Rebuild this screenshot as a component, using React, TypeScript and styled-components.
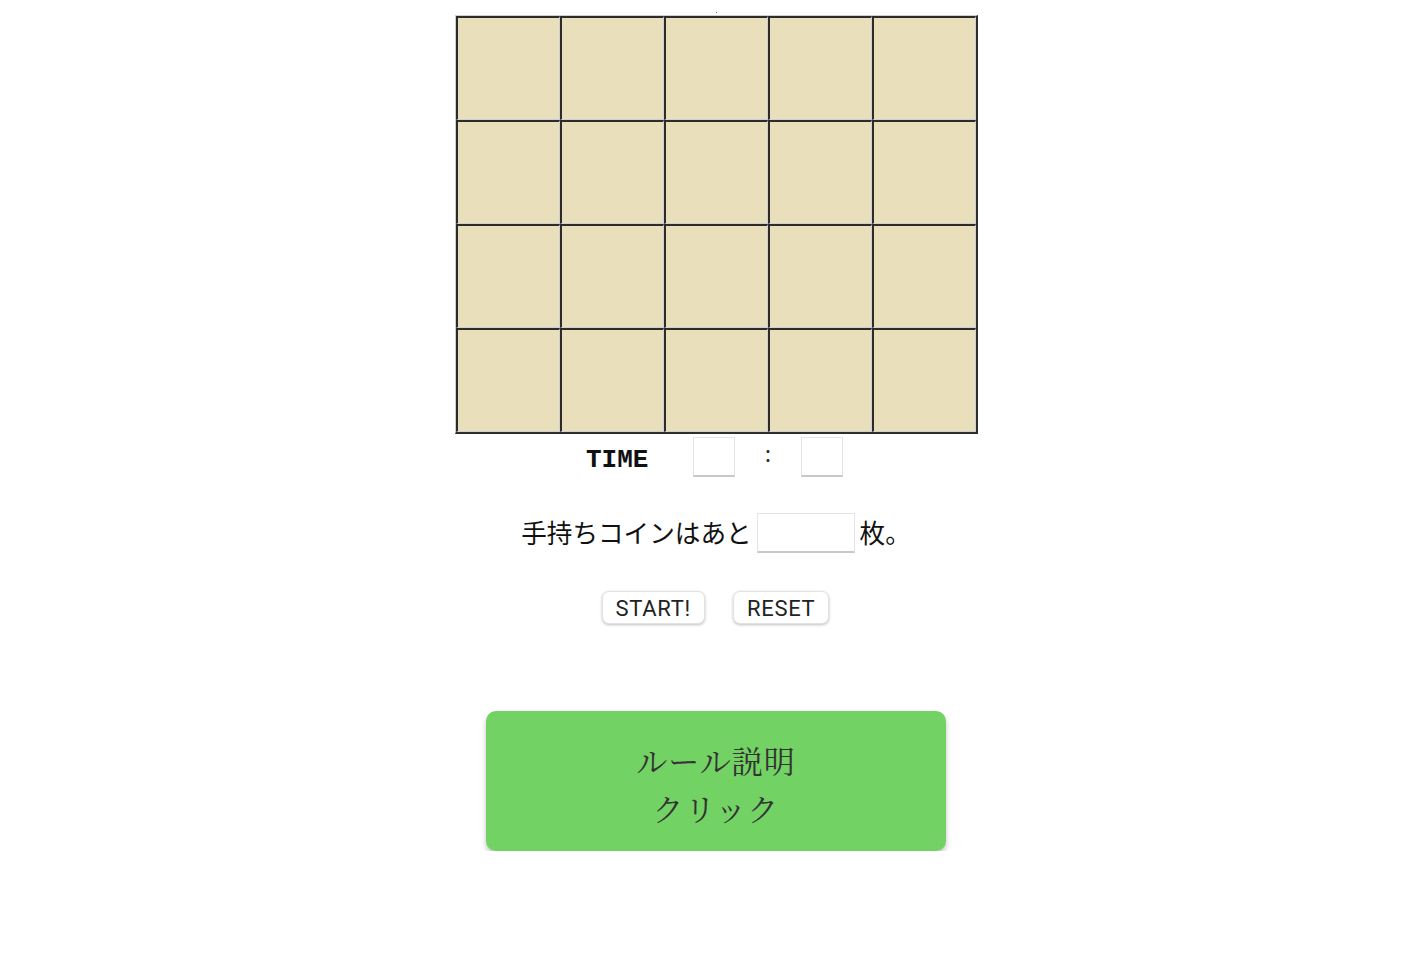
import React from "react";
import styled, { createGlobalStyle } from "styled-components";

const Global = createGlobalStyle`
  html, body { margin: 0; padding: 0; background: #fff; }
  body { font-family: "Noto Sans CJK JP", "Noto Sans", sans-serif; }
`;

const Page = styled.div`
  padding-left: 8px;
  display: flex;
  flex-direction: column;
  align-items: center;
`;

const Dot = styled.div`
  width: 1px;
  height: 1px;
  margin-top: 12px;
  margin-bottom: 2px;
  background: #d81bd0;
`;

const Board = styled.table`
  border-collapse: separate;
  border-spacing: 0;
  border-style: solid;
  border-width: 1px 2px 2px 1px;
  border-color: #cfcfcf #2e2e2e #2e2e2e #cfcfcf;
`;

const Cell = styled.td`
  width: 101px;
  height: 101px;
  padding: 0;
  background: #e9dfbb;
  border-style: solid;
  border-width: 2px 1px 1px 2px;
  border-color: #2b2b2b #cfcfcf #cfcfcf #2b2b2b;
`;

const TimeRow = styled.div`
  display: flex;
  align-items: center;
  height: 40px;
  margin-top: 3px;
  margin-left: -3px;
`;

const TimeLabel = styled.span`
  font-family: "Liberation Mono", "Courier New", monospace;
  font-weight: bold;
  font-size: 26px;
  color: #111;
  margin-top: 6px;
  width: 107px;
`;

const Colon = styled.span`
  font-family: "Noto Sans", sans-serif;
  font-size: 22px;
  color: #222;
  width: 66px;
  text-align: center;
  margin-top: -8px;
`;

const SmallBox = styled.input<{ $w: number }>`
  box-sizing: border-box;
  width: ${(p) => p.$w}px;
  height: 40px;
  border: 1px solid #e4e4e4;
  border-bottom: 2px solid #c8c8c8;
  background: #fff;
  padding: 0;
  outline: none;
`;

const CoinRow = styled.div`
  display: flex;
  align-items: center;
  margin-top: 36px;
  font-size: 25.6px;
  color: #111;
  gap: 5px;
  margin-left: 0px;
`;

const CoinText = styled.span`
  line-height: 1;
  margin-top: -2px;
`;

const ButtonRow = styled.div`
  display: flex;
  gap: 28px;
  margin-top: 38px;
  margin-left: -1px;
`;

const Btn = styled.button`
  font-family: Roboto, "Noto Sans", sans-serif;
  font-size: 22px;
  letter-spacing: 0.7px;
  color: #222;
  background: #fff;
  border: 1px solid #e2e2e2;
  border-radius: 7px;
  box-shadow: 0 1px 3px rgba(0, 0, 0, 0.25);
  height: 33px;
  padding: 3px 13px 0;
  line-height: 1;
  cursor: pointer;
`;

const RuleButton = styled.button`
  margin-top: 87px;
  width: 460px;
  height: 140px;
  background: #72d264;
  border: none;
  border-radius: 10px;
  box-shadow: 0 3px 5px rgba(0, 0, 0, 0.25);
  font-family: "Liberation Serif", "Noto Serif CJK JP", "Noto Sans CJK JP", serif;
  font-size: 31px;
  line-height: 48px;
  color: #333;
  letter-spacing: 1px;
  padding-top: 13px;
  cursor: pointer;
`;

export default function App() {
  const rows = [0, 1, 2, 3];
  const cols = [0, 1, 2, 3, 4];
  return (
    <>
      <Global />
      <Page>
        <Dot />
        <Board>
          <tbody>
            {rows.map((r) => (
              <tr key={r}>
                {cols.map((c) => (
                  <Cell key={c} />
                ))}
              </tr>
            ))}
          </tbody>
        </Board>
        <TimeRow>
          <TimeLabel>TIME</TimeLabel>
          <SmallBox $w={42} />
          <Colon>:</Colon>
          <SmallBox $w={42} />
        </TimeRow>
        <CoinRow>
          <CoinText>手持ちコインはあと</CoinText>
          <SmallBox $w={98} />
          <CoinText>枚。</CoinText>
        </CoinRow>
        <ButtonRow>
          <Btn>START!</Btn>
          <Btn>RESET</Btn>
        </ButtonRow>
        <RuleButton>
          ルール説明
          <br />
          クリック
        </RuleButton>
      </Page>
    </>
  );
}
